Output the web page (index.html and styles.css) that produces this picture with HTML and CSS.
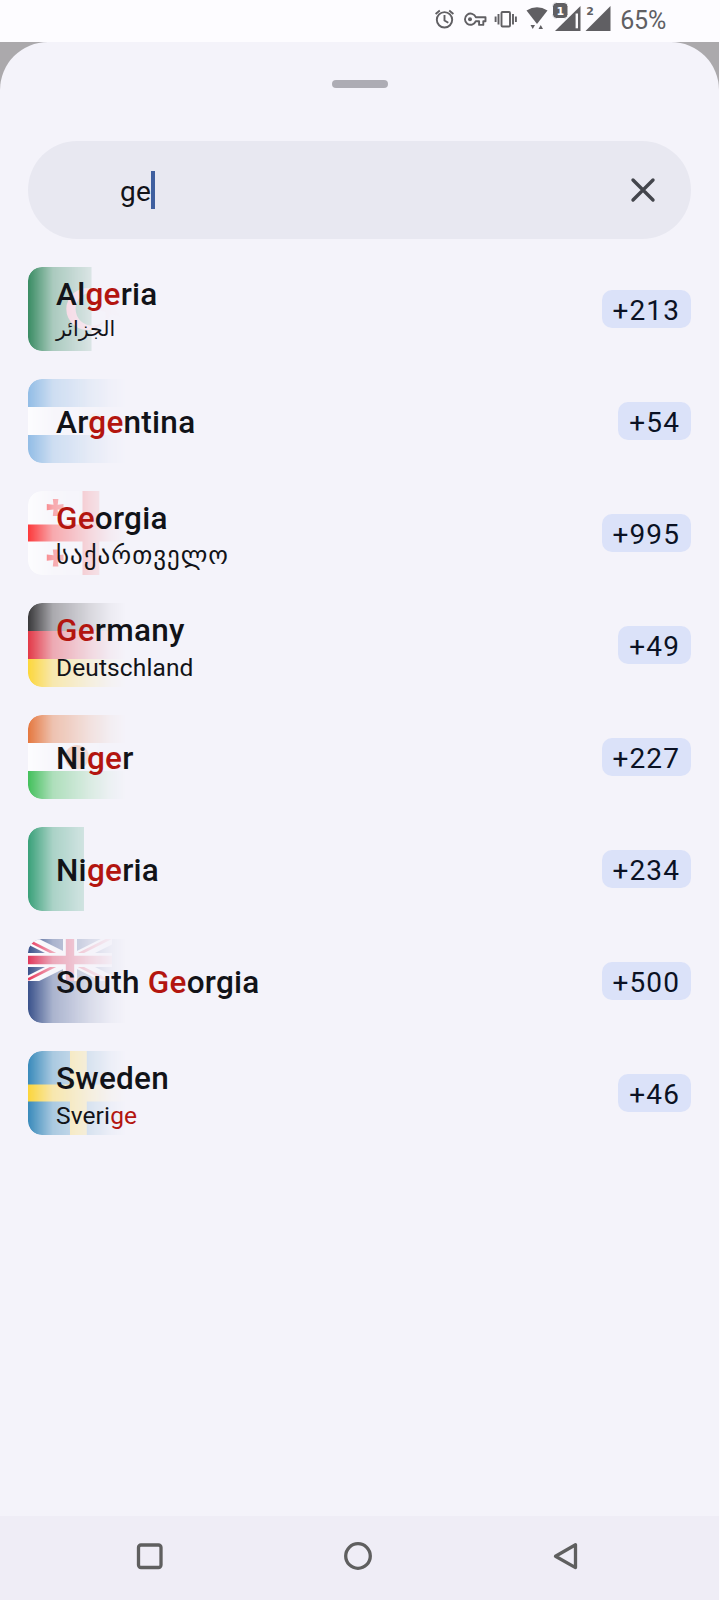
FILE: index.html
```html
<!DOCTYPE html>
<html lang="en">
<head>
<meta charset="utf-8">
<title>Country picker</title>
<link rel="stylesheet" href="styles.css">
</head>
<body>
<div class="screen">
  <header class="status">
    <svg class="status-icons" width="180" height="42" viewBox="430 0 180 42">
      <g fill="none" stroke="#605f63" stroke-width="1.9">
        <circle cx="444.500" cy="19.800" r="7.700"/>
        <path d="M444.500 15v5.500l3.800 2.300M435.600 14l4.200-3.500M453.400 14l-4.200-3.500"/>
        <path d="M480 17h5.200v4H483v3.700h-4.200V21h-3.300a5.600 5.600 0 1 1 0-4z" stroke-linejoin="round" transform="translate(.3 .2)"/>
        <rect x="501.500" y="12" width="8.500" height="14.500" rx="1"/>
        <path d="M498.500 14v10.500M513 14v10.500M495.600 16.500v5.500M515.900 16.500v5.500"/>
      </g>
      <circle cx="470" cy="19.200" r="2" fill="#605f63"/>
      <g fill="#605f63">
        <path d="M526.500 10.500q10.500-6.500 21 0L537 24z"/>
        <path d="M530.500 25h4.500l-2.250 4zM538.500 29h4.500l-2.250-4z"/>
        <path d="M555 31l25.500-25v25z"/>
        <path d="M585.500 31l25-25v25z"/>
        <rect x="552.500" y="2.500" width="15.500" height="16" rx="4" stroke="#fdfcff"/>
      </g>
      <path d="M576.800 13.500v14.800" stroke="#fdfcff" stroke-width="2.400"/>
      <text x="560.300" y="14.500" text-anchor="middle" class="sim" fill="#fff">1</text>
      <text x="590" y="14.500" text-anchor="middle" class="sim" fill="#605f63">2</text>
    </svg>
    <span class="battery">65%</span>
  </header>

  <div class="scrim">
    <main class="sheet">
      <div class="handle"></div>
      <div class="search">
        <span class="query">ge</span><span class="caret"></span>
        <svg class="clear" width="28" height="28" viewBox="0 0 28 28"><path d="M4 4l20 20M24 4L4 24" fill="none" stroke="#43454c" stroke-width="3.400" stroke-linecap="round"/></svg>
      </div>

      <ul class="list">
        <li class="row">
          <svg class="flag" viewBox="0 0 98 84"><rect width="63.500" height="84" fill="#006c35"/><path d="M77.500 52.500A21 21 0 1 1 77.500 31.500A16.800 16.800 0 1 0 77.500 52.500z" fill="#ff8fa3"/><path d="M68 42l9.500-3V29l6 8 9.500-3-6 8 6 8-9.500-3-6 8V45z" fill="#ff8fa3" opacity=".45"/></svg>
          <div class="names"><div class="name">Al<b>ge</b>ria</div><div class="local arabic" lang="ar">الجزائر</div></div>
          <span class="code">+213</span>
        </li>
        <li class="row">
          <svg class="flag" viewBox="0 0 98 84"><rect width="98" height="84" fill="#74acdf"/><rect y="28" width="98" height="28" fill="#fff"/><circle cx="67" cy="42" r="8" fill="#f6d9a0"/></svg>
          <div class="names"><div class="name">Ar<b>ge</b>ntina</div></div>
          <span class="code">+54</span>
        </li>
        <li class="row">
          <svg class="flag" viewBox="0 0 98 84"><rect width="98" height="84" fill="#fff"/><path d="M0 33.600h98v16.800H0zM54.500 0h16.800v84H54.500z" fill="#f00"/><path id="cross" d="M24.800 8h5.600l-.7 5.700 5.800-.7v6.200l-5.800-.7.7 6.500h-5.600l.7-6.500-6.700.7V13l6.700.7z" fill="#f00"/><use href="#cross" y="50.500"/></svg>
          <div class="names"><div class="name"><b>Ge</b>orgia</div><div class="local georgian" lang="ka">საქართველო</div></div>
          <span class="code">+995</span>
        </li>
        <li class="row">
          <svg class="flag" viewBox="0 0 98 84"><rect width="98" height="28" fill="#000"/><rect y="28" width="98" height="28" fill="#dd0010"/><rect y="56" width="98" height="28" fill="#ffce00"/></svg>
          <div class="names"><div class="name"><b>Ge</b>rmany</div><div class="local">Deutschland</div></div>
          <span class="code">+49</span>
        </li>
        <li class="row">
          <svg class="flag" viewBox="0 0 98 84"><rect width="98" height="84" fill="#fff"/><rect width="98" height="28" fill="#e05206"/><rect y="56" width="98" height="28" fill="#0db02b"/><circle cx="49" cy="42" r="12" fill="#e05206"/></svg>
          <div class="names"><div class="name">Ni<b>ge</b>r</div></div>
          <span class="code">+227</span>
        </li>
        <li class="row">
          <svg class="flag" viewBox="0 0 98 84"><rect width="56" height="84" fill="#008751"/></svg>
          <div class="names"><div class="name">Ni<b>ge</b>ria</div></div>
          <span class="code">+234</span>
        </li>
        <li class="row">
          <svg class="flag" viewBox="0 0 98 84">
            <defs><clipPath id="canton"><path d="M0 0h84v42H0z"/></clipPath></defs>
            <rect width="98" height="84" fill="#012169"/>
            <g clip-path="url(#canton)">
              <path d="M0 0l84 42M84 0L0 42" stroke="#fff" stroke-width="10"/>
              <path d="M0 1.500l42 21M84 -1.500l-42 21M0 40.500l42-21M84 43.500l-42-21" stroke="#e4002b" stroke-width="2.900"/>
              <path d="M42 0v42M0 21h84" stroke="#fff" stroke-width="14"/>
              <path d="M42 0v42M0 21h84" stroke="#d8002b" stroke-width="8.400"/>
            </g>
          </svg>
          <div class="names"><div class="name">South <b>Ge</b>orgia</div></div>
          <span class="code">+500</span>
        </li>
        <li class="row">
          <svg class="flag" viewBox="0 0 98 84"><rect width="98" height="84" fill="#006aa7"/><path d="M0 33.600h98v16.800H0zM42 0h16.800v84H42z" fill="#fecc00"/></svg>
          <div class="names"><div class="name">Sweden</div><div class="local">Sveri<b>ge</b></div></div>
          <span class="code">+46</span>
        </li>
      </ul>
    </main>
  </div>

  <nav class="nav">
    <svg width="32" height="32" viewBox="0 0 32 32"><rect x="4.500" y="5" width="22.500" height="22.500" rx="2.500"/></svg>
    <svg width="32" height="32" viewBox="0 0 32 32"><circle cx="16" cy="16" r="12.300"/></svg>
    <svg width="32" height="32" viewBox="0 0 32 32"><path d="M5.500 16.200L25.500 4.800v22.800z"/></svg>
  </nav>
</div>
</body>
</html>
```
FILE: styles.css
```css
* { box-sizing: border-box; }
body { margin: 0; font-family: Roboto, "DejaVu Sans", sans-serif; color: #121318; background: #fdfcff; }
.screen { width: 719px; height: 1600px; display: flex; flex-direction: column; }
.status { height: 42px; display: flex; justify-content: flex-end; align-items: center; padding-right: 53px; background: #fdfcff; }
.status-icons { display: block; overflow: visible; margin-right: 10px; }
.sim { font: 700 11px "DejaVu Sans", sans-serif; }
.battery { font-size: 25px; line-height: 40px; color: #605f63; letter-spacing: -0.2px; }
.scrim { flex: 1; background: #aba9ac; }
.sheet { height: 100%; background: #f4f3fa; border-radius: 48px 48px 0 0; padding: 38px 28px 0; }
.handle { width: 56px; height: 8px; border-radius: 4px; background: #adacb4; margin: 0 auto; }
.search { height: 98px; margin-top: 53px; border-radius: 49px; background: #e8e8f1; display: flex; align-items: center; padding: 0 34px 0 92px; }
.query { font-size: 28px; line-height: 42px; padding-top: 3px; letter-spacing: .4px; }
.caret { width: 4px; height: 38px; background: #3f5f9f; }
.clear { margin-left: auto; }
.list { list-style: none; margin: 28px 0 0; padding: 0; display: flex; flex-direction: column; gap: 28px; }
.row { height: 84px; display: grid; grid-template-columns: 28px 1fr auto; align-items: center; }
.flag { grid-area: 1 / 1 / 2 / 3; width: 98px; height: 84px; border-radius: 14px 0 0 14px; -webkit-mask-image: linear-gradient(90deg, rgba(0,0,0,.77), rgba(0,0,0,.3) 25px, rgba(0,0,0,.12) 60px, rgba(0,0,0,.03) 82px, transparent 98px); mask-image: linear-gradient(90deg, rgba(0,0,0,.77), rgba(0,0,0,.3) 25px, rgba(0,0,0,.12) 60px, rgba(0,0,0,.03) 82px, transparent 98px); }
.names { grid-area: 1 / 2 / 2 / 3; position: relative; padding-top: 3px; }
.name { font-size: 31.5px; line-height: 42px; font-weight: 500; letter-spacing: .26px; }
.local { font-size: 24.500px; line-height: 31px; letter-spacing: .12px; }
.name b, .local b { font-weight: inherit; color: #b3150f; }
.arabic { font-family: "DejaVu Sans", sans-serif; font-size: 20.5px; letter-spacing: 0; line-height: 26px; padding-bottom: 6px; }
.georgian { font-family: "DejaVu Sans", sans-serif; font-size: 25px; letter-spacing: 1px; }
.code { grid-area: 1 / 3 / 2 / 4; height: 38px; line-height: 41px; padding: 0 11px; border-radius: 10px; background: #dbe2f9; font-size: 28px; letter-spacing: 1.1px; color: #0b1224; }
.nav { height: 84px; background: #efedf6; display: flex; justify-content: space-between; align-items: center; padding: 0 137px 4px 134px; }
.nav svg { fill: none; stroke: #5f5f5f; stroke-width: 3.300; stroke-linejoin: round; }
```
